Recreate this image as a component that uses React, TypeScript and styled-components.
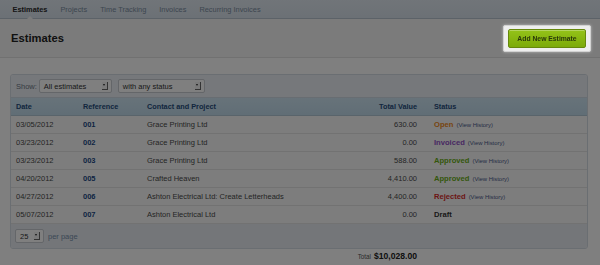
import styled, { createGlobalStyle } from "styled-components";

type Status = "Open" | "Invoiced" | "Approved" | "Rejected" | "Draft";

interface Estimate {
  date: string;
  reference: string;
  contact: string;
  total: string;
  status: Status;
}

const estimates: Estimate[] = [
  { date: "03/05/2012", reference: "001", contact: "Grace Printing Ltd", total: "630.00", status: "Open" },
  { date: "03/23/2012", reference: "002", contact: "Grace Printing Ltd", total: "0.00", status: "Invoiced" },
  { date: "03/23/2012", reference: "003", contact: "Grace Printing Ltd", total: "588.00", status: "Approved" },
  { date: "04/20/2012", reference: "005", contact: "Crafted Heaven", total: "4,410.00", status: "Approved" },
  { date: "04/27/2012", reference: "006", contact: "Ashton Electrical Ltd: Create Letterheads", total: "4,400.00", status: "Rejected" },
  { date: "05/07/2012", reference: "007", contact: "Ashton Electrical Ltd", total: "0.00", status: "Draft" },
];

const statusColors: Record<Status, string> = {
  Open: "#f08a1c",
  Invoiced: "#9050c4",
  Approved: "#6aae16",
  Rejected: "#d82c2c",
  Draft: "#333333",
};

const tabs = ["Estimates", "Projects", "Time Tracking", "Invoices", "Recurring Invoices"];

function App() {
  return (
    <>
      <GlobalStyle />
      <Page>
        <Nav>
          {tabs.map((tab, i) => (
            <Tab key={tab} $active={i === 0}>
              {tab}
            </Tab>
          ))}
        </Nav>
        <Header>
          <Title>Estimates</Title>
          <Spotlight>
            <AddButton>Add New Estimate</AddButton>
          </Spotlight>
        </Header>
        <Content>
          <Panel>
            <Filters>
              <FilterLabel>Show:</FilterLabel>
              <Select $width={73}>
                All estimates
                <SelectArrow />
              </Select>
              <Select $width={87}>
                with any status
                <SelectArrow />
              </Select>
            </Filters>
            <HeadRow>
              <span>Date</span>
              <span>Reference</span>
              <span>Contact and Project</span>
              <TotalCell>Total Value</TotalCell>
              <StatusCell>Status</StatusCell>
            </HeadRow>
            {estimates.map(e => (
              <Row key={e.reference}>
                <span>{e.date}</span>
                <RefLink>{e.reference}</RefLink>
                <span>{e.contact}</span>
                <TotalCell>{e.total}</TotalCell>
                <StatusCell>
                  <StatusText $color={statusColors[e.status]}>{e.status}</StatusText>
                  {e.status !== "Draft" && <History>(View History)</History>}
                </StatusCell>
              </Row>
            ))}
            <Footer>
              <Select $width={29}>
                25
                <SelectArrow />
              </Select>
              <PerPage>per page</PerPage>
            </Footer>
          </Panel>
          <TotalRow>
            <TotalLabel>Total</TotalLabel>
            <TotalAmount>$10,028.00</TotalAmount>
          </TotalRow>
        </Content>
        <Dim />
      </Page>
    </>
  );
}

const GlobalStyle = createGlobalStyle`
  html, body {
    margin: 0;
    padding: 0;
    background: #ffffff;
  }
  body {
    font-family: "Liberation Sans", Arial, Helvetica, sans-serif;
  }
`;

const Page = styled.div`
  width: 600px;
  height: 265px;
  background: #ffffff;
  overflow: hidden;
`;

const Nav = styled.div`
  display: flex;
  align-items: center;
  height: 18px;
  padding-left: 6px;
  background: linear-gradient(180deg, #e2eaf2 0%, #d8e2ec 100%);
  border-bottom: 1px solid #b8c4d0;
`;

const Tab = styled.div<{ $active?: boolean }>`
  position: relative;
  height: 100%;
  display: flex;
  align-items: center;
  padding: 0 6.5px;
  font-size: 7.4px;
  font-weight: ${p => (p.$active ? 700 : 400)};
  color: ${p => (p.$active ? "#2a2a2a" : "#7a8ca0")};

  &::after {
    content: "";
    display: ${p => (p.$active ? "block" : "none")};
    position: absolute;
    left: 50%;
    bottom: -1px;
    margin-left: -3px;
    border-left: 3px solid transparent;
    border-right: 3px solid transparent;
    border-bottom: 3px solid #f7f7f7;
  }
`;

const Header = styled.div`
  display: flex;
  align-items: center;
  justify-content: space-between;
  height: 38px;
  padding: 0 9px 0 11px;
  background: #f7f7f7;
  border-bottom: 1px solid #e2e2e2;
`;

const Title = styled.h1`
  margin: 0;
  font-size: 11.2px;
  font-weight: 700;
  color: #222222;
`;

const Spotlight = styled.div`
  position: relative;
  z-index: 20;
  padding: 3px 4px;
  background: #eeeeee;
  border: 1px solid #d2d2d2;
  border-radius: 2px;
  box-shadow: 0 0 3px rgba(255, 255, 255, 0.5);
`;

const AddButton = styled.div`
  display: flex;
  align-items: center;
  justify-content: center;
  width: 78px;
  height: 19px;
  box-sizing: border-box;
  border: 1px solid #66880c;
  border-radius: 2px;
  background: linear-gradient(180deg, #94c318 0%, #7caa0a 100%);
  box-shadow: inset 0 1px 0 rgba(255, 255, 255, 0.3);
  font-size: 6.8px;
  font-weight: 700;
  color: #2a380a;
`;

const Content = styled.div`
  padding: 16px 12px 0 10px;
`;

const Panel = styled.div`
  border: 1px solid #d4dce4;
  border-radius: 3px;
  overflow: hidden;
  background: #fdfdfd;
`;

const Filters = styled.div`
  display: flex;
  align-items: center;
  gap: 6px;
  height: 22px;
  padding-left: 5px;
  background: #ecf1f6;
  border-bottom: 1px solid #d0dae4;
`;

const FilterLabel = styled.span`
  font-size: 7.5px;
  color: #6c7886;
  margin-right: -4px;
`;

const Select = styled.div<{ $width: number }>`
  position: relative;
  display: flex;
  align-items: center;
  width: ${p => p.$width}px;
  height: 14px;
  box-sizing: border-box;
  padding-left: 4px;
  background: #ffffff;
  border: 1px solid #c8ccd2;
  border-radius: 2px;
  font-size: 7.5px;
  color: #333333;
`;

const SelectArrow = styled.span`
  position: absolute;
  right: 3px;
  top: 2px;
  width: 5px;
  height: 7px;
  border-right: 1px solid #666666;
  border-bottom: 1px solid #666666;
  background: #f4f4f4;

  &::after {
    content: "";
    position: absolute;
    left: 1px;
    top: 2px;
    border-left: 1.5px solid transparent;
    border-right: 1.5px solid transparent;
    border-top: 2px solid #222222;
  }
`;

const gridColumns = "67px 64px 1fr 70px 153px";

const HeadRow = styled.div`
  display: grid;
  grid-template-columns: ${gridColumns};
  align-items: center;
  height: 18px;
  padding-left: 5px;
  background: linear-gradient(180deg, #cfe6f4 0%, #c2dcec 100%);
  border-bottom: 1px solid #b2c8d6;
  font-size: 7.3px;
  font-weight: 700;
  color: #254c7c;
  box-sizing: border-box;
`;

const Row = styled.div`
  display: grid;
  grid-template-columns: ${gridColumns};
  align-items: center;
  height: 18px;
  box-sizing: border-box;
  padding-left: 5px;
  background: #fbfbfb;
  border-bottom: 1px solid #e4e4e4;
  font-size: 7.5px;
  color: #4a4a4a;
  white-space: nowrap;
`;

const RefLink = styled.span`
  font-weight: 700;
  color: #1d4a86;
`;

const TotalCell = styled.span`
  text-align: right;
  padding-right: 17px;
`;

const StatusCell = styled.span`
  display: flex;
  align-items: baseline;
  gap: 3px;
`;

const StatusText = styled.span<{ $color: string }>`
  font-weight: 700;
  font-size: 7.6px;
  color: ${p => p.$color};
`;

const History = styled.span`
  font-size: 5.9px;
  color: #4a5a8a;
`;

const Footer = styled.div`
  display: flex;
  align-items: center;
  gap: 4px;
  height: 24px;
  padding-left: 4px;
  background: #e8edf2;
`;

const PerPage = styled.span`
  font-size: 7.5px;
  color: #7890ac;
`;

const TotalRow = styled.div`
  display: flex;
  align-items: baseline;
  justify-content: flex-end;
  gap: 3px;
  padding: 2px 171px 0 0;
`;

const TotalLabel = styled.span`
  font-size: 6.3px;
  color: #555555;
`;

const TotalAmount = styled.span`
  font-size: 8.6px;
  font-weight: 700;
  color: #222222;
`;

const Dim = styled.div`
  position: fixed;
  inset: 0;
  z-index: 10;
  background: rgba(0, 0, 0, 0.5);
`;

export default App;
